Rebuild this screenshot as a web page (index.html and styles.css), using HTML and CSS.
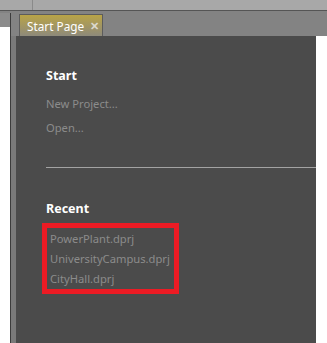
FILE: index.html
```html
<!DOCTYPE html>
<html lang="en">
<head>
    <meta charset="UTF-8">
    <title>Start Page</title>
    <link rel="stylesheet" href="styles.css">
</head>
<body>
    <div class="topbar">
        <div class="topbar-cell"></div>
        <div class="topbar-cell wide"></div>
    </div>

    <div class="workspace">
        <div class="leftpane">
            <div class="leftpane-inner">
                <div class="lefttab"></div>
                <div class="leftbody"></div>
            </div>
        </div>

        <div class="docpane">
            <div class="tabstrip">
                <div class="tab">
                    <span class="tab-title">Start Page</span>
                    <span class="tab-close">✕</span>
                </div>
            </div>

            <div class="docbody">
                <div class="gutter"></div>
                <div class="startpage">
                    <h2 class="section-title">Start</h2>
                    <a class="link" href="#">New Project...</a>
                    <a class="link" href="#">Open...</a>

                    <hr class="divider">

                    <h2 class="section-title recent-title">Recent</h2>
                    <div class="recent-list">
                        <a class="recent-item" href="#">PowerPlant.dprj</a>
                        <a class="recent-item" href="#">UniversityCampus.dprj</a>
                        <a class="recent-item" href="#">CityHall.dprj</a>
                    </div>
                </div>
                <div class="outside"></div>
            </div>
        </div>
    </div>
</body>
</html>
```

FILE: styles.css
```css
html, body {
    margin: 0;
    height: 100%;
}
body {
    font-family: 'Noto Sans', 'Open Sans', sans-serif;
    font-size: 11.2px;
    background: #4b4b4b;
    display: flex;
    flex-direction: column;
    overflow: hidden;
}
.topbar {
    height: 10px;
    display: flex;
    background: #a8a8a8;
    border-bottom: 1px solid #555;
}
.topbar-cell {
    width: 32px;
    border-right: 1px solid #8a8a8a;
}
.topbar-cell.wide {
    flex: 1;
    border-right: none;
}
.workspace {
    flex: 1;
    display: flex;
    min-height: 0;
}
.leftpane {
    width: 11px;
    padding-top: 2px;
    background: #838383;
    display: flex;
}
.leftpane-inner {
    flex: 1;
    display: flex;
    flex-direction: column;
    border-right: 1px solid #3c3c3c;
}
.lefttab {
    height: 14px;
    background: #8c8c8c;
}
.leftbody {
    flex: 1;
    background: #fff;
}
.docpane {
    flex: 1;
    display: flex;
    flex-direction: column;
}
.tabstrip {
    height: 25px;
    background: #838383;
    display: flex;
    align-items: flex-end;
    padding-left: 8px;
}
.tab {
    box-sizing: border-box;
    width: 84px;
    height: 22px;
    border: 1px solid #5c5c5c;
    border-bottom: none;
    background: linear-gradient(#b9a447, #8e8a7b);
    display: flex;
    align-items: center;
    padding-left: 7px;
    color: #fff;
}
.tab-title {
    font-size: 11.8px;
}
.tab-close {
    margin-left: 6px;
    font-size: 11px;
    font-weight: bold;
    color: #dcd8cc;
}
.docbody {
    flex: 1;
    display: flex;
}
.gutter {
    width: 5px;
    background: #7a7a7a;
}
.startpage {
    width: 270px;
    padding: 32px 0 0 30px;
    display: flex;
    flex-direction: column;
    align-items: flex-start;
}
.outside {
    flex: 1;
    background: #fff;
}
.section-title {
    margin: 0;
    font-size: 12.5px;
    font-weight: bold;
    color: #fff;
    line-height: 16px;
}
.link {
    color: #8c8c8c;
    text-decoration: none;
    line-height: 24px;
}
.section-title + .link {
    margin-top: 8px;
}
.divider {
    align-self: stretch;
    margin: 27px 0 0;
    border: none;
    border-top: 1px solid #a3a3a3;
}
.recent-title {
    margin-top: 33px;
}
.recent-list {
    margin-top: 6px;
    margin-left: -4px;
    border: 5px solid #ec1b24;
    padding: 1px 6px 0 0;
    width: 121px;
    display: flex;
    flex-direction: column;
}
.recent-item {
    color: #8c8c8c;
    text-decoration: none;
    line-height: 20px;
    padding-left: 3px;
}
```
